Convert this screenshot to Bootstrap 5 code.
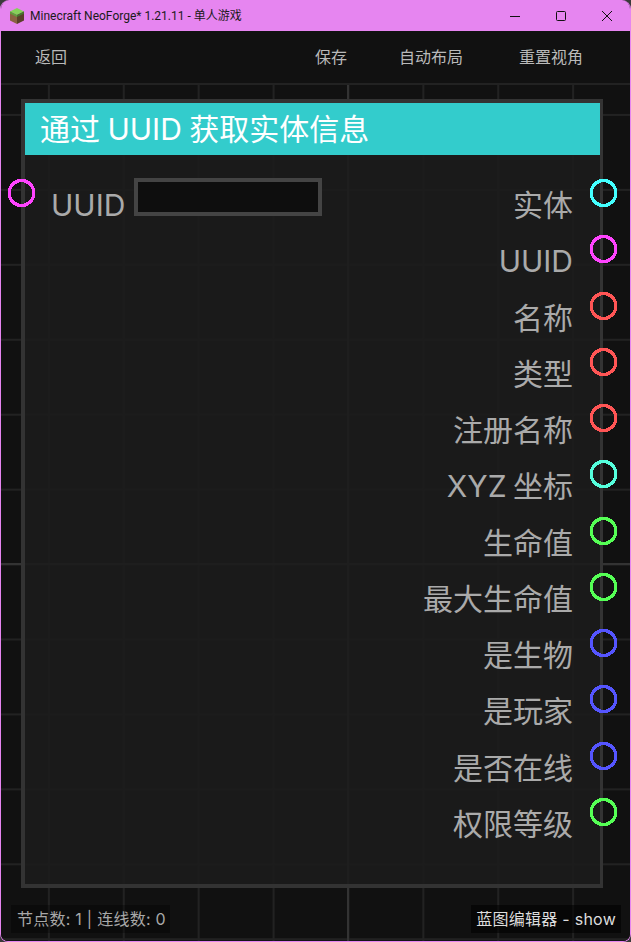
<!DOCTYPE html>
<html lang="zh">
<head>
<meta charset="UTF-8">
<meta name="viewport" content="width=device-width, initial-scale=1.0">
<title>Minecraft NeoForge* 1.21.11 - 单人游戏</title>
<link href="https://cdn.jsdelivr.net/npm/bootstrap@5.3.2/dist/css/bootstrap.min.css" rel="stylesheet">
<style>
    html, body { height: 100%; background: #3a3a3a; }
    body { font-family: Inter, "Noto Sans CJK SC", sans-serif; overflow: hidden; }
    .win-frame { width: 631px; height: 942px; border: 1px solid #e685f0; border-top: 0; border-radius: 9px 9px 8px 8px; overflow: hidden; background: #111; }
    .title-bar { height: 31px; background: #e685f0; color: #1a1a1a; font-family: Roboto, "Noto Sans CJK SC", sans-serif; font-size: 12px; padding-left: 9px; gap: 5px; margin: 0 -1px; }
    .title-bar .win-ctrls { margin-left: auto; padding-right: 1px; }
    .win-ctrl { width: 46px; height: 31px; }
    .tool-bar { height: 54px; background: #111; border-bottom: 2px solid #222; font-size: 16px; color: #b9b9b9; padding-left: 34px; }
    .tool-right { margin-left: auto; gap: 53px; padding-right: 47px; }
    .tool-right span:first-child { margin-right: -1px; }
    .tool-right span:last-child { margin-left: 3px; }
    .canvas-area { height: 856px; position: relative;
        background-color: #111;
        background-image: linear-gradient(#333, #333), linear-gradient(#333, #333), linear-gradient(to right, #222 2px, transparent 2px), linear-gradient(to bottom, #222 2px, transparent 2px);
        background-size: 100% 2px, 2px 100%, 74.9px 74.95px, 74.9px 74.95px;
        background-position: 0 478px, 346px 0, -28px -46px, -28px -46px;
        background-repeat: no-repeat, no-repeat, repeat, repeat;
    }
    .bp-node { position: absolute; left: 20px; top: 14px; width: 582px; height: 789px; border: 4px solid #333; border-right-width: 3px; background: rgba(28, 28, 28, .9); }
    .bp-head { height: 52px; background: #33cccc; color: #fff; font-size: 30px; line-height: 52px; padding-left: 15px; word-spacing: -1px; }
    .bp-body { padding-top: 10px; }
    .bp-in { position: relative; height: 56px; padding-left: 26px; color: #aaa; font-size: 30px; line-height: 1; }
    .bp-in span { padding-top: 25px; }
    .bp-input { width: 188px; height: 38px; margin: 13px 0 0 9px; border: 4px solid #444; background: #0e0e0e; }
    .bp-outs { padding-right: 27px; }
    .bp-out { position: relative; height: 56.25px; text-align: right; color: #aaa; font-size: 30px; line-height: 1; padding-top: 25px; word-spacing: -2px; }
    .bp-port { position: absolute; width: 30px; height: 30px; shape-rendering: crispEdges; }
    .bp-out .bp-port { right: -45px; top: 13px; }
    .bp-in .bp-port { left: -19px; top: 13px; }
    .status-tag { position: absolute; bottom: 8px; height: 28px; line-height: 28px; font-size: 16px; letter-spacing: .25px; background: rgba(0, 0, 0, .3); color: #a8a8a8; padding: 0 4px 0 6px; }
    .status-left { left: 10px; }
    .status-right { right: 9px; color: #ddd; background: rgba(0, 0, 0, .55); padding: 0 5px; }
</style>
</head>
<body>
<div class="win-frame">
    <div class="title-bar d-flex align-items-center">
        <svg width="16" height="16" viewBox="0 0 16 16">
            <polygon points="8,0 15,3.5 8,7 1,3.5" fill="#86d05a"/>
            <polygon points="1,3.5 8,7 8,16 1,12.5" fill="#8a6242"/>
            <polygon points="15,3.5 8,7 8,16 15,12.5" fill="#5b3f2a"/>
            <polygon points="1,3.5 8,7 8,9 1,5.5" fill="#5f9e3e"/>
            <polygon points="15,3.5 8,7 8,9 15,5.5" fill="#47782e"/>
        </svg>
        <span>Minecraft NeoForge* 1.21.11 - 单人游戏</span>
        <div class="win-ctrls d-flex">
            <div class="win-ctrl d-flex align-items-center justify-content-center">
                <svg width="10" height="10" viewBox="0 0 10 10"><path d="M0 5.5H10" stroke="#111" fill="none"/></svg>
            </div>
            <div class="win-ctrl d-flex align-items-center justify-content-center">
                <svg width="10" height="10" viewBox="0 0 10 10"><rect x=".5" y=".5" width="9" height="9" rx="1" stroke="#111" fill="none"/></svg>
            </div>
            <div class="win-ctrl d-flex align-items-center justify-content-center">
                <svg width="10" height="10" viewBox="0 0 10 10"><path d="M0 0L10 10M10 0L0 10" stroke="#111" fill="none"/></svg>
            </div>
        </div>
    </div>
    <div class="tool-bar d-flex align-items-center">
        <span>返回</span>
        <div class="tool-right d-flex">
            <span>保存</span>
            <span>自动布局</span>
            <span>重置视角</span>
        </div>
    </div>
    <div class="canvas-area">
        <div class="bp-node">
            <div class="bp-head">通过 UUID 获取实体信息</div>
            <div class="bp-body d-flex justify-content-between">
                <div class="bp-in d-flex">
                    <svg class="bp-port"><use href="#port" stroke="#ff44ff"/></svg>
                    <span>UUID</span>
                    <div class="bp-input"></div>
                </div>
                <div class="bp-outs" id="outs"></div>
            </div>
        </div>
        <div class="status-tag status-left">节点数: 1 | 连线数: 0</div>
        <div class="status-tag status-right">蓝图编辑器 - show</div>
    </div>
</div>
<svg width="0" height="0" class="position-absolute">
    <defs>
        <polygon id="port" fill="none" stroke-width="3.4" points="27.77,18.29 24.48,23.98 18.79,27.27 12.21,27.27 6.52,23.98 3.23,18.29 3.23,11.71 6.52,6.02 12.21,2.73 18.79,2.73 24.48,6.02 27.77,11.71"/>
    </defs>
</svg>
<script src="https://cdn.jsdelivr.net/npm/bootstrap@5.3.2/dist/js/bootstrap.bundle.min.js"></script>
<script>
    const outputs = [
        ['实体', '#44ffff'], ['UUID', '#ff44ff'], ['名称', '#ff5555'], ['类型', '#ff5555'],
        ['注册名称', '#ff5555'], ['XYZ 坐标', '#55ffdd'], ['生命值', '#55ff55'], ['最大生命值', '#55ff55'],
        ['是生物', '#5555ff'], ['是玩家', '#5555ff'], ['是否在线', '#5555ff'], ['权限等级', '#55ff55']
    ];
    document.getElementById('outs').innerHTML = outputs.map(([name, color]) =>
        `<div class="bp-out">${name}<svg class="bp-port"><use href="#port" stroke="${color}"/></svg></div>`
    ).join('');
</script>
</body>
</html>
